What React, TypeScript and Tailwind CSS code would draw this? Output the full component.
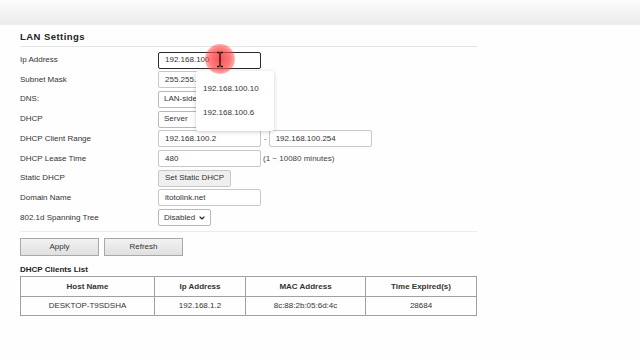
import { ChevronDown } from "lucide-react";

const FONT = { fontFamily: '"Liberation Sans", Arial, sans-serif' };

function Input({ value, w = "w-[103px]", focused = false }: { value: string; w?: string; focused?: boolean }) {
  return (
    <div
      className={`flex h-[17px] ${w} items-center rounded-[2px] bg-white px-[6px] text-[8px] text-[#333] ${
        focused ? "border-[1.5px] border-[#2a2a2a]" : "border border-[#c8c8c8]"
      }`}
    >
      {value}
    </div>
  );
}

function Select({ value, w }: { value: string; w: string }) {
  return (
    <div className={`flex h-[17px] ${w} items-center justify-between rounded-[2px] border border-[#b8b8b8] bg-white pl-[5px] pr-[4px] text-[8px] text-[#333]`}>
      <span>{value}</span>
      <ChevronDown size={8} strokeWidth={3.5} className="text-[#222]" />
    </div>
  );
}

function Row({ label, children }: { label: string; children: React.ReactNode }) {
  return (
    <div className="flex h-[19.7px] items-center">
      <div className="w-[138px] text-[8px] text-[#333]">{label}</div>
      {children}
    </div>
  );
}

const CLIENTS = [["DESKTOP-T9SDSHA", "192.168.1.2", "8c:88:2b:05:6d:4c", "28684"]];

export default function App() {
  return (
    <div className="relative h-[360px] w-[640px] overflow-hidden bg-[#fefefe]" style={FONT}>
      <div className="h-[24px] bg-gradient-to-b from-[#fdfdfd] via-[#f4f4f4] to-[#ececec] shadow-[0_1px_1px_rgba(0,0,0,0.06)]" />

      <div className="w-[477px] pl-[20px] pt-[6px]">
        <h1 className="text-[9.5px] font-bold tracking-[0.45px] text-[#222]">LAN Settings</h1>
        <div className="mt-[2px] h-px bg-[#e6e6e6]" />

        <div className="mt-[3px] flex flex-col">
          <Row label="Ip Address">
            <Input value="192.168.100" focused />
          </Row>
          <Row label="Subnet Mask">
            <Input value="255.255.255.0" />
          </Row>
          <Row label="DNS:">
            <Select value="LAN-side DNS" w="w-[103px]" />
          </Row>
          <Row label="DHCP">
            <Select value="Server" w="w-[53px]" />
          </Row>
          <Row label="DHCP Client Range">
            <Input value="192.168.100.2" />
            <span className="ml-[3px] mr-[2px] text-[8px] text-[#555]">-</span>
            <Input value="192.168.100.254" />
          </Row>
          <Row label="DHCP Lease Time">
            <Input value="480" />
            <span className="ml-[2px] text-[8px] text-[#444]">(1 ~ 10080 minutes)</span>
          </Row>
          <Row label="Static DHCP">
            <div className="flex h-[17px] items-center rounded-[2px] border border-[#c8c8c8] bg-[#efefef] px-[6px] text-[8px] text-[#333]">
              Set Static DHCP
            </div>
          </Row>
          <Row label="Domain Name">
            <Input value="itotolink.net" />
          </Row>
          <Row label="802.1d Spanning Tree">
            <Select value="Disabled" w="w-[53px]" />
          </Row>
        </div>

        <div className="mt-[4px] h-px bg-[#ececec]" />

        <div className="mt-[6px] flex gap-[5px]">
          <button className="h-[18px] w-[79px] border border-[#a8a8a8] bg-gradient-to-b from-[#f2f2f2] to-[#e0e0e0] text-[8px] text-[#333]">
            Apply
          </button>
          <button className="h-[18px] w-[79px] border border-[#a8a8a8] bg-gradient-to-b from-[#f2f2f2] to-[#e0e0e0] text-[8px] text-[#333]">
            Refresh
          </button>
        </div>

        <div className="mt-[8px] text-[8px] font-bold text-[#222]">DHCP Clients List</div>
        <table className="w-[457px] border-collapse text-[8px] text-[#333]">
          <thead>
            <tr className="h-[19.5px]">
              <th className="w-[134px] border border-[#a0a0a0] font-bold">Host Name</th>
              <th className="w-[91px] border border-[#a0a0a0] font-bold">Ip Address</th>
              <th className="w-[120px] border border-[#a0a0a0] font-bold">MAC Address</th>
              <th className="border border-[#a0a0a0] font-bold">Time Expired(s)</th>
            </tr>
          </thead>
          <tbody>
            {CLIENTS.map((row) => (
              <tr key={row[0]} className="h-[19.5px]">
                {row.map((cell) => (
                  <td key={cell} className="border border-[#a0a0a0] text-center">
                    {cell}
                  </td>
                ))}
              </tr>
            ))}
          </tbody>
        </table>
      </div>

      {/* autocomplete suggestions */}
      <div className="absolute left-[196px] top-[71px] flex w-[78px] flex-col rounded-[2px] bg-white py-[6px] text-[8px] text-[#333] shadow-[0_1px_4px_rgba(0,0,0,0.2)]">
        <div className="flex h-[24px] items-center px-[7px]">192.168.100.10</div>
        <div className="flex h-[24px] items-center px-[7px]">192.168.100.6</div>
      </div>

      {/* click highlight + I-beam cursor */}
      <div className="pointer-events-none absolute left-[205px] top-[44px] h-[30px] w-[30px] rounded-full bg-[radial-gradient(circle,rgba(255,60,60,0.9)_0%,rgba(255,70,70,0.7)_50%,rgba(255,120,120,0)_100%)]" />
      <svg className="absolute left-[216px] top-[51px]" width="8" height="17" viewBox="0 0 8 17">
        <path d="M1 1.5h2.5M4.5 1.5H7M4 2v13M1 15.5h2.5M4.5 15.5H7" stroke="#111" strokeWidth="1.3" fill="none" />
      </svg>
    </div>
  );
}
